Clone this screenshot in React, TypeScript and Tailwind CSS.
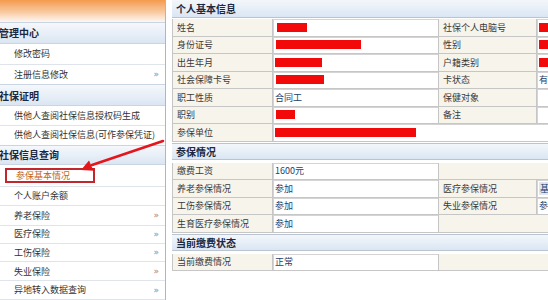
import React from "react";

const font = "font-['Noto_Sans_CJK_SC','Liberation_Sans',sans-serif]";

function SideHeader({ text, h }: { text: string; h: string }) {
  return (
    <div
      className={`${h} flex items-center border-y border-[#c9d5e3] bg-gradient-to-b from-[#f5f8fc] to-[#dbe6f2] text-[10px] font-bold text-[#1b2840] -mt-px`}
    >
      <span className="-ml-[1px]">{text}</span>
    </div>
  );
}

function SideItem({ text, h, more }: { text: string; h: string; more?: boolean }) {
  return (
    <div
      className={`${h} flex items-center justify-between border-b border-[#dfe4ea] bg-white pl-[14px] pr-[6px] text-[9px] text-[#333]`}
    >
      <span className="whitespace-nowrap">{text}</span>
      {more && <span className="font-['DejaVu_Sans',sans-serif] text-[9px] leading-none text-[#8c8c8c]">»</span>}
    </div>
  );
}

function Red({ w, ml = "ml-[2px]" }: { w: string; ml?: string }) {
  return <span className={`block h-[9px] bg-[#f20a0a] ${w} ${ml}`} />;
}

function Label({ children, w }: { children?: React.ReactNode; w: string }) {
  return (
    <div
      className={`${w} shrink-0 flex items-center border-r border-b border-[#c6c6c6] bg-[#f7f4ec] pl-[4px] text-[9px] text-[#3a3a3a] whitespace-nowrap overflow-hidden`}
    >
      {children}
    </div>
  );
}

function Value({ children, w }: { children?: React.ReactNode; w: string }) {
  return (
    <div
      className={`${w} shrink-0 flex items-center border-r border-b border-[#c6c6c6] bg-white pl-[2px] text-[9px] text-[#24406a] whitespace-nowrap overflow-hidden shadow-[inset_1px_1px_0_#d4d4d4]`}
    >
      {children}
    </div>
  );
}

function Row({ children }: { children: React.ReactNode }) {
  return <div className="flex h-[17.5px] border-l border-[#c6c6c6]">{children}</div>;
}

function SectionHeader({ text, cls = "" }: { text: string; cls?: string }) {
  return (
    <div
      className={`h-[17px] flex items-center border-y border-[#b9c4d0] bg-gradient-to-b from-[#f3f7fb] to-[#dae6f3] pl-[4px] text-[10px] font-bold text-[#1b2840] ${cls}`}
    >
      {text}
    </div>
  );
}

const L1 = "w-[100px]";
const V1 = "w-[166px]";
const L2 = "w-[98px]";
const V2 = "flex-1";

export default function App() {
  return (
    <div className={`relative w-[548px] h-[300px] overflow-hidden bg-white ${font}`}>
      <div className="flex h-full">
        {/* Sidebar */}
        <div className="w-[166px] shrink-0 border-r border-[#b5b5b5] flex flex-col">
          <div className="h-[23px] bg-gradient-to-b from-[#f39a4c] via-[#f8c79c] to-[#fbfcfd]" />
          <SideHeader text="管理中心" h="h-[22px]" />
          <SideItem text="修改密码" h="h-[22px]" />
          <SideItem text="注册信息修改" h="h-[20px]" more />
          <SideHeader text="社保证明" h="h-[22px]" />
          <SideItem text="供他人查阅社保信息授权码生成" h="h-[20px]" />
          <SideItem text="供他人查阅社保信息(可作参保凭证)" h="h-[20px]" />
          <SideHeader text="社保信息查询" h="h-[21px]" />
          <div className="h-[22px] flex items-center border-b border-[#dfe4ea] bg-white pl-[5px]">
            <span className="h-[15px] w-[90px] flex items-center border-2 border-[#c1272d] pl-[9px] text-[9px] text-[#c0661c] whitespace-nowrap">
              参保基本情况
            </span>
          </div>
          <SideItem text="个人账户余额" h="h-[19px]" />
          <SideItem text="养老保险" h="h-[20px]" more />
          <SideItem text="医疗保险" h="h-[18px]" more />
          <SideItem text="工伤保险" h="h-[19px]" more />
          <SideItem text="失业保险" h="h-[19px]" more />
          <SideItem text="异地转入数据查询" h="h-[19px]" more />
        </div>

        {/* Content */}
        <div className="flex-1 pl-[6px] flex flex-col">
          <SectionHeader text="个人基本信息" cls="-mt-px h-[19px]" />
          <div className="mt-[1px]">
            <Row>
              <Label w={L1}>姓名</Label>
              <Value w={V1}><Red w="w-[30px]" /></Value>
              <Label w={L2}>社保个人电脑号</Label>
              <Value w={V2}><Red w="w-[12px]" ml="ml-0" /></Value>
            </Row>
            <Row>
              <Label w={L1}>身份证号</Label>
              <Value w={V1}><Red w="w-[85px]" ml="ml-[1px]" /></Value>
              <Label w={L2}>性别</Label>
              <Value w={V2}><Red w="w-[12px]" ml="ml-0" /></Value>
            </Row>
            <Row>
              <Label w={L1}>出生年月</Label>
              <Value w={V1}><Red w="w-[47px]" ml="ml-0" /></Value>
              <Label w={L2}>户籍类别</Label>
              <Value w={V2}><Red w="w-[12px]" ml="ml-0" /></Value>
            </Row>
            <Row>
              <Label w={L1}>社会保障卡号</Label>
              <Value w={V1}><Red w="w-[48px]" ml="ml-[1px]" /></Value>
              <Label w={L2}>卡状态</Label>
              <Value w={V2}>有</Value>
            </Row>
            <Row>
              <Label w={L1}>职工性质</Label>
              <Value w={V1}>合同工</Value>
              <Label w={L2}>保健对象</Label>
              <Value w={V2} />
            </Row>
            <Row>
              <Label w={L1}>职别</Label>
              <Value w={V1}><Red w="w-[19px]" ml="ml-[1px]" /></Value>
              <Label w={L2}>备注</Label>
              <Value w={V2} />
            </Row>
            <Row>
              <Label w={L1}>参保单位</Label>
              <Value w="flex-1"><Red w="w-[141px]" ml="ml-0" /></Value>
            </Row>
          </div>

          <SectionHeader text="参保情况" cls="mt-[1px]" />
          <div className="mt-[3px]">
            <Row>
              <Label w={L1}>缴费工资</Label>
              <Value w={V1}>1600元</Value>
              <Label w="flex-1" />
            </Row>
            <Row>
              <Label w={L1}>养老参保情况</Label>
              <Value w={V1}>参加</Value>
              <Label w={L2}>医疗参保情况</Label>
              <Value w={V2}>
                <span className="bg-[#dfe6ef] px-[1px]">基</span>
              </Value>
            </Row>
            <Row>
              <Label w={L1}>工伤参保情况</Label>
              <Value w={V1}>参加</Value>
              <Label w={L2}>失业参保情况</Label>
              <Value w={V2}>参</Value>
            </Row>
            <Row>
              <Label w={L1}>生育医疗参保情况</Label>
              <Value w={V1}>参加</Value>
              <Label w="flex-1" />
            </Row>
          </div>

          <SectionHeader text="当前缴费状态" cls="mt-[1px]" />
          <div className="mt-[3px]">
            <Row>
              <Label w={L1}>当前缴费情况</Label>
              <Value w={V1}>正常</Value>
              <Label w="flex-1" />
            </Row>
          </div>
        </div>
      </div>

      {/* Red annotation arrow */}
      <svg
        className="absolute left-0 top-0 pointer-events-none"
        width="548"
        height="300"
        viewBox="0 0 548 300"
      >
        <line x1="163" y1="141" x2="92" y2="165" stroke="#e3161c" strokeWidth="2.6" strokeLinecap="round" />
        <polygon points="81,170 93.5,170.8 89,160.5" fill="#e3161c" />
      </svg>
    </div>
  );
}
